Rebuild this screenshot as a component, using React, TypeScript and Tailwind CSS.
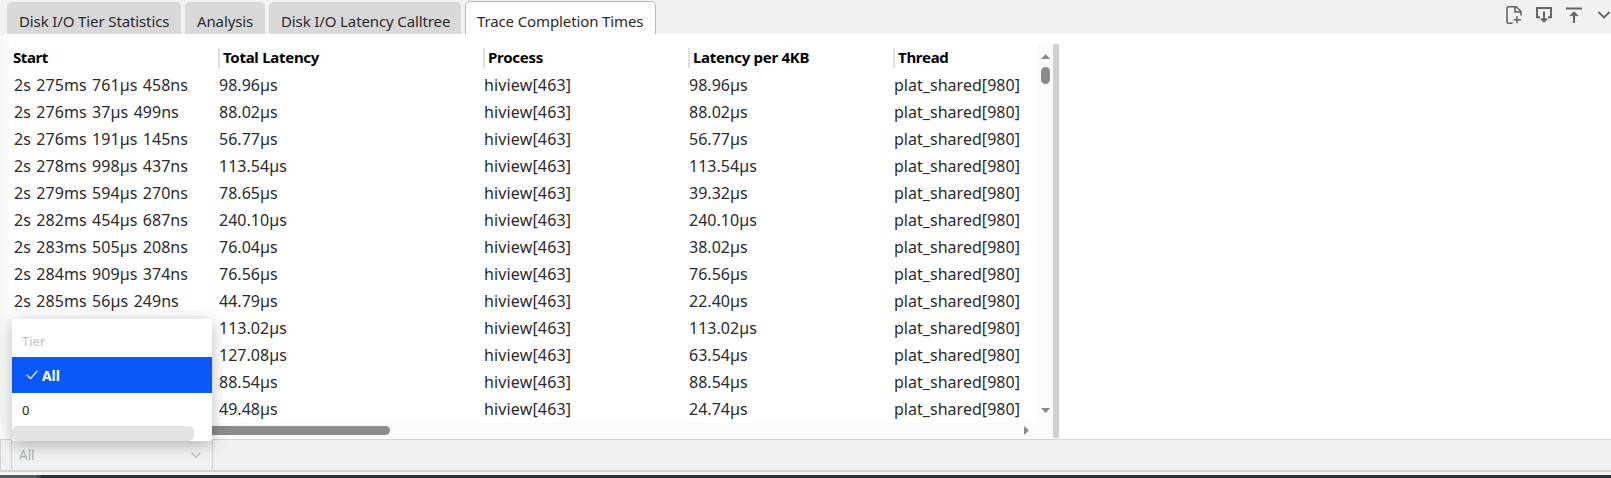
const tabs = [
  { label: "Disk I/O Tier Statistics", width: "w-[174px]" },
  { label: "Analysis", width: "w-[80px]" },
  { label: "Disk I/O Latency Calltree", width: "w-[192px]" },
];

const rows = [
  ["2s 275ms 761µs 458ns", "98.96µs", "98.96µs"],
  ["2s 276ms 37µs 499ns", "88.02µs", "88.02µs"],
  ["2s 276ms 191µs 145ns", "56.77µs", "56.77µs"],
  ["2s 278ms 998µs 437ns", "113.54µs", "113.54µs"],
  ["2s 279ms 594µs 270ns", "78.65µs", "39.32µs"],
  ["2s 282ms 454µs 687ns", "240.10µs", "240.10µs"],
  ["2s 283ms 505µs 208ns", "76.04µs", "38.02µs"],
  ["2s 284ms 909µs 374ns", "76.56µs", "76.56µs"],
  ["2s 285ms 56µs 249ns", "44.79µs", "22.40µs"],
  ["", "113.02µs", "113.02µs"],
  ["", "127.08µs", "63.54µs"],
  ["", "88.54µs", "88.54µs"],
  ["", "49.48µs", "24.74µs"],
];

const headers = ["Total Latency", "Process", "Latency per 4KB", "Thread"];
const grid = "grid grid-cols-[206px_265px_205px_205px_144px] pl-[13px]";

function TabBar() {
  return (
    <div className="flex h-[34px] shrink-0 items-end justify-between bg-[#f1f1f1]">
      <div className="flex items-end gap-1 pl-[7px]">
        {tabs.map((t) => (
          <div
            key={t.label}
            className={`${t.width} h-8 rounded-t-[5px] bg-[#d8d8d8] pt-[6px] pl-3 text-[15px] leading-[26px] tracking-[-0.12px] whitespace-nowrap text-[#2b2b2b]`}
          >
            {t.label}
          </div>
        ))}
        <div className="h-[33px] w-[191px] rounded-t-[5px] border border-b-0 border-[#b8b8b8] bg-white pt-[6px] pl-[11px] text-[15px] leading-[26px] tracking-[-0.12px] whitespace-nowrap text-[#2b2b2b]">
          Trace Completion Times
        </div>
      </div>
      <svg className="h-[34px] w-[111px]" viewBox="1500 0 111 34" fill="none" stroke="#646464" strokeWidth="1.6">
        <path d="M1512.5 23.2h-4.2a1.3 1.3 0 0 1-1.3-1.3V8a1.3 1.3 0 0 1 1.3-1.3h8l4.7 4.8v4M1515 7v5h6M1517 16.2v7M1513.5 19.7h7.5" />
        <path d="M1540 17.2h-3V8h14v9.2h-3M1544 11.5v10" strokeWidth="2" />
        <path d="m1540.3 18.8 3.7 3.7 3.7-3.7Z" fill="#646464" strokeWidth=".6" />
        <path d="M1566 8.5h16M1574 13v10" strokeWidth="2" />
        <path d="m1569.8 15.7 4.2-4.2 4.2 4.2Z" fill="#646464" strokeWidth=".6" />
        <path d="m1598.5 12 5.5 5.5 5.5-5.5" strokeWidth="1.8" />
      </svg>
    </div>
  );
}

function DataTable() {
  return (
    <div className="relative flex h-[394px] w-[1059px] shrink-0 flex-col overflow-hidden">
      <div className="flex min-h-0 flex-1">
        <div className="flex w-[1038px] flex-col">
          <div className={`${grid} h-7 shrink-0 pt-1 text-[15px] font-bold text-black`}>
            <div className="leading-[19px] tracking-[-0.45px]">Start</div>
            {headers.map((h) => (
              <div
                key={h}
                className="-ml-[1px] h-5 border-l-2 border-[#dedede] pl-[3px] leading-[19px] tracking-[-0.28px] whitespace-nowrap"
              >
                {h}
              </div>
            ))}
          </div>
          {rows.map((r, i) => (
            <div
              key={i}
              className={`${grid} h-[27px] shrink-0 text-[16px] leading-[26px] tracking-[0.03px] whitespace-nowrap text-[#2b2b2b]`}
            >
              <div className="pl-[1px] [word-spacing:1.3px]">{r[0]}</div>
              <div>{r[1]}</div>
              <div className="tracking-[0.15px]">hiview[463]</div>
              <div>{r[2]}</div>
              <div>plat_shared[980]</div>
            </div>
          ))}
        </div>
        <div className="w-[15px] bg-[#fbfbfb]">
          <svg className="h-full w-full" viewBox="0 0 15 394" preserveAspectRatio="xMinYMin slice" fill="#8b8b8b">
            <path d="M3 15 7.6 10l4.6 5ZM3 364h9.2l-4.6 5Z" />
            <rect x="3" y="23" width="9" height="17" rx="4.5" />
          </svg>
        </div>
        <div className="w-[6px] bg-[#d0d0d0]" />
      </div>
      <div className="absolute bottom-0 left-0 flex h-[15px] w-[1053px] items-start justify-between bg-[#fbfbfb] pt-[3px] pr-6">
        <div className="ml-3 h-[9px] w-[378px] rounded-full bg-[#8b8b8b]" />
        <svg width="5" height="9" viewBox="0 0 5 9" fill="#8b8b8b">
          <path d="m0 0 5 4.5L0 9Z" />
        </svg>
      </div>
    </div>
  );
}

function TierMenu() {
  return (
    <div className="absolute top-[319px] left-3 flex h-[122px] w-[200px] flex-col overflow-hidden rounded-[2px] bg-white text-[13px] shadow-[0_3px_16px_rgba(0,0,0,0.28)]">
      <div className="h-[38px] shrink-0 pt-3 pl-[10px] leading-5 text-[#bfbfbf]">Tier</div>
      <div className="flex h-9 shrink-0 items-center bg-[#0a59f7] pl-[14px] font-bold text-white">
        <svg width="12" height="10" viewBox="0 0 12 10" fill="none" stroke="white" strokeWidth="1.2">
          <path d="m.7 4.8 3.8 3.8L11.4.9" />
        </svg>
        <span className="ml-1 text-[14px] tracking-[-0.1px]">All</span>
      </div>
      <div className="h-[33px] shrink-0 pt-[7px] pl-[10px] leading-5 text-[#222]">0</div>
      <div className="h-[15px] w-[182px] rounded-[5px] bg-[#e3e3e3]" />
    </div>
  );
}

export default function App() {
  return (
    <div className="relative flex h-[478px] w-[1611px] flex-col overflow-hidden bg-white font-['Noto_Sans','Open_Sans',sans-serif]">
      <TabBar />
      <main className="flex h-[405px] shrink-0 bg-[linear-gradient(90deg,#f6f6f6_0,#fff_12px)] pt-[10px]">
        <DataTable />
      </main>
      <footer className="flex h-[33px] shrink-0 border-t border-b-2 border-l border-[#d3d3d3] bg-[#f0f0f0] pl-[10px]">
        <div className="flex w-[202px] items-center justify-between border-x border-t border-[#cccccc] pr-[11px] pb-[1px] pl-[7px] text-[13.5px] text-[#acb0b6]">
          <span>All</span>
          <svg width="10" height="7" viewBox="0 0 10 7" fill="none" stroke="#bcbcbc" strokeWidth="1.3">
            <path d="m.7.8 4.3 4.4L9.3.8" />
          </svg>
        </div>
      </footer>
      <div className="h-[3px] shrink-0 bg-[#f3f5f5]" />
      <div className="flex h-[3px] shrink-0 bg-[#1f3440]">
        <div className="w-[37px] bg-[#4c5b63]" />
        <div className="w-1 bg-[#35464f]" />
      </div>
      <TierMenu />
    </div>
  );
}
